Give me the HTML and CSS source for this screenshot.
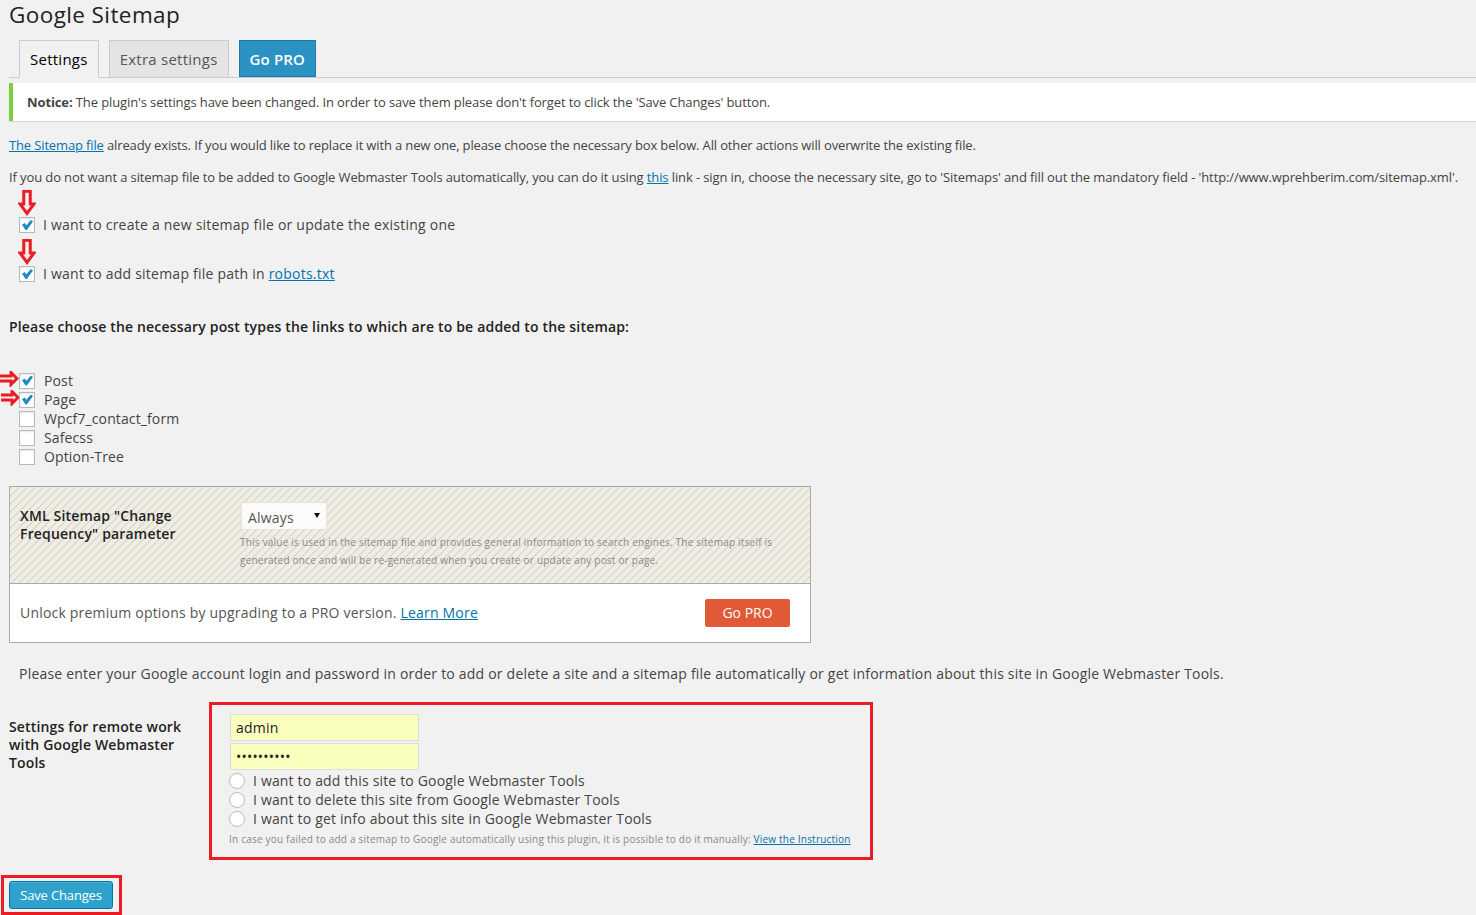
FILE: index.html
```html
<!DOCTYPE html>
<html lang="en">
<head>
    <meta charset="UTF-8">
    <title>Google Sitemap</title>
    <link rel="stylesheet" href="styles.css">
</head>
<body>
<div class="wrap">

    <h2 class="page-title">Google Sitemap</h2>

    <!-- Tabs -->
    <div class="nav-tabs">
        <a class="nav-tab active" href="#">Settings</a>
        <a class="nav-tab" href="#">Extra settings</a>
        <a class="nav-tab pro" href="#">Go PRO</a>
    </div>

    <!-- Notice -->
    <div class="notice"><strong>Notice:</strong> The plugin's settings have been changed. In order to save them please don't forget to click the 'Save Changes' button.</div>

    <p class="intro"><a href="#">The Sitemap file</a> already exists. If you would like to replace it with a new one, please choose the necessary box below. All other actions will overwrite the existing file.</p>
    <p class="intro second">If you do not want a sitemap file to be added to Google Webmaster Tools automatically, you can do it using <a href="#">this</a> link - sign in, choose the necessary site, go to 'Sitemaps' and fill out the mandatory field - 'http://www.wprehberim.com/sitemap.xml'.</p>

    <!-- Sitemap options -->
    <div class="option first">
        <svg class="arrow-down" viewBox="0 0 18 27"><path d="M5.75 1.25H12.25V14H16L9 23.500 2 14H5.75Z"/></svg>
        <label><input type="checkbox" checked> <span>I want to create a new sitemap file or update the existing one</span></label>
    </div>
    <div class="option">
        <svg class="arrow-down" viewBox="0 0 18 27"><path d="M5.75 1.25H12.25V14H16L9 23.500 2 14H5.75Z"/></svg>
        <label><input type="checkbox" checked> <span>I want to add sitemap file path in <a href="#">robots.txt</a></span></label>
    </div>

    <h4 class="types-title">Please choose the necessary post types the links to which are to be added to the sitemap:</h4>

    <ul class="post-types">
        <li>
            <svg class="arrow-right" viewBox="0 0 19 16"><path d="M-3 5H11V1.500L17 7.500 11 13.500V10H-3Z"/></svg>
            <label><input type="checkbox" checked> <span>Post</span></label>
        </li>
        <li>
            <svg class="arrow-right" viewBox="0 0 19 16"><path d="M-3 5H11V1.500L17 7.500 11 13.500V10H-3Z"/></svg>
            <label><input type="checkbox" checked> <span>Page</span></label>
        </li>
        <li><label><input type="checkbox"> <span>Wpcf7_contact_form</span></label></li>
        <li><label><input type="checkbox"> <span>Safecss</span></label></li>
        <li><label><input type="checkbox"> <span>Option-Tree</span></label></li>
    </ul>

    <!-- Pro block -->
    <div class="pro-block">
        <div class="pro-options">
            <div class="pro-label">XML Sitemap "Change Frequency" parameter</div>
            <div class="pro-field">
                <div class="select-box">Always</div>
                <p class="pro-hint">This value is used in the sitemap file and provides general information to search engines. The sitemap itself is generated once and will be re-generated when you create or update any post or page.</p>
            </div>
        </div>
        <div class="pro-footer">
            <span>Unlock premium options by upgrading to a PRO version. <a href="#">Learn More</a></span>
            <a class="btn-pro" href="#">Go PRO</a>
        </div>
    </div>

    <p class="account-note">Please enter your Google account login and password in order to add or delete a site and a sitemap file automatically or get information about this site in Google Webmaster Tools.</p>

    <!-- Remote work settings -->
    <div class="remote">
        <div class="remote-label">Settings for remote work with Google Webmaster Tools</div>
        <div class="remote-box">
            <input class="text-input" type="text" value="admin">
            <input class="text-input" type="password" value="1234567890">
            <label class="radio-row"><input type="radio" name="site"> <span>I want to add this site to Google Webmaster Tools</span></label>
            <label class="radio-row"><input type="radio" name="site"> <span>I want to delete this site from Google Webmaster Tools</span></label>
            <label class="radio-row"><input type="radio" name="site"> <span>I want to get info about this site in Google Webmaster Tools</span></label>
            <div class="remote-help">In case you failed to add a sitemap to Google automatically using this plugin, it is possible to do it manually: <a href="#">View the Instruction</a></div>
        </div>
    </div>

    <div class="save-box">
        <button class="btn-save">Save Changes</button>
    </div>

</div>
</body>
</html>
```

FILE: styles.css
```css
/* Global */
* {
    box-sizing: border-box;
}

html, body {
    margin: 0;
    padding: 0;
    background: #f1f1f1;
}

body {
    color: #444;
    font-family: "Open Sans", sans-serif;
    font-size: 14px;
    letter-spacing: 0.2px;
    overflow-x: hidden;
}

a {
    color: #0073aa;
}

.wrap {
    padding-left: 9px;
    height: 915px;
    overflow: hidden;
    position: relative;
}

.page-title {
    margin: 0;
    color: #222;
    font-size: 22.5px;
    font-weight: 400;
    line-height: 29px;
    letter-spacing: 0.4px;
}

/* Tabs */
.nav-tabs {
    display: flex;
    gap: 10px;
    height: 38px;
    margin-top: 11px;
    padding-left: 10px;
    border-bottom: 1px solid #ccc;
}

.nav-tab {
    height: 38px;
    padding: 0 10px;
    border: 1px solid #ccc;
    background: #e4e4e4;
    color: #555;
    font-size: 15px;
    letter-spacing: 0.25px;
    line-height: 37px;
    text-decoration: none;
}

.nav-tab.active {
    background: #f1f1f1;
    border-bottom-color: #f1f1f1;
    color: #000;
}

.nav-tab.pro {
    height: 37px;
    background: #2b93c4;
    border-color: #1e7ba8;
    color: #fff;
    font-weight: 600;
    letter-spacing: 0.15px;
}

/* Notice */
.notice {
    height: 38px;
    margin-top: 5px;
    padding-left: 14px;
    background: #fff;
    border-left: 4px solid #7ad03a;
    box-shadow: 0 1px 1px rgba(0, 0, 0, 0.1);
    font-size: 13px;
    letter-spacing: -0.11px;
    line-height: 39px;
}

.intro {
    margin: 14px 0 0;
    font-size: 13px;
    letter-spacing: -0.14px;
    line-height: 20px;
    white-space: nowrap;
}

.intro.second {
    margin-top: 12px;
    letter-spacing: -0.11px;
}

/* Checkboxes */
input[type="checkbox"], input[type="radio"] {
    appearance: none;
    position: relative;
    flex: none;
    width: 16px;
    height: 16px;
    margin: 0;
    background: #fff;
    border: 1px solid #b4b9be;
}

input[type="checkbox"] {
    box-shadow: inset 0 1px 2px rgba(0, 0, 0, 0.1);
}

input[type="checkbox"]:checked::before {
    content: "";
    position: absolute;
    left: 2px;
    top: 2px;
    width: 11px;
    height: 10px;
    background: #1e8cbe;
    clip-path: polygon(0 48%, 24% 30%, 40% 52%, 80% 0, 100% 15%, 44% 100%, 32% 100%);
}

input[type="radio"] {
    border: 1.5px solid #bbb;
    border-radius: 50%;
}

.option {
    position: relative;
    height: 20px;
    margin: 29px 0 0 10px;
    letter-spacing: 0.23px;
    line-height: 20px;
}

.option.first {
    margin-top: 28px;
}

.option label {
    display: flex;
    align-items: center;
    gap: 8px;
    white-space: nowrap;
}

.arrow-down {
    position: absolute;
    left: -1px;
    top: -25px;
    width: 18px;
    height: 27px;
}

.arrow-right {
    position: absolute;
    left: -9px;
    top: 0;
    width: 19px;
    height: 16px;
    overflow: hidden;
}

.arrow-down path, .arrow-right path {
    fill: none;
    stroke: #ed1c24;
    stroke-width: 3;
}

.types-title {
    margin: 33px 0 0;
    color: #222;
    font-size: 14px;
    font-weight: 600;
    letter-spacing: 0.18px;
    line-height: 20px;
}

/* Post types */
.post-types {
    list-style: none;
    margin: 34px 0 0;
    padding: 0;
    letter-spacing: 0.12px;
}

.post-types li {
    position: relative;
    height: 19px;
    line-height: 19px;
}

.post-types li + li .arrow-right {
    left: -8px;
}

.post-types li label {
    display: flex;
    align-items: center;
    gap: 9px;
    padding-left: 10px;
    white-space: nowrap;
}

/* Pro block */
.pro-block {
    width: 802px;
    margin-top: 20px;
    border: 1px solid #aaa;
    background: #fff;
}

.pro-options {
    display: flex;
    height: 97px;
    padding: 15px 10px 0;
    border-bottom: 1px solid #aaa;
    background: linear-gradient(135deg, #d8d8d8 15%, #f1ede0 15%, #f1ede0 50%, #d8d8d8 50%, #d8d8d8 65%, #f1ede0 65%) 0 0 / 8px 8px;
}

.pro-label {
    width: 221px;
    flex: none;
    padding-top: 5px;
    color: #222;
    font-size: 14px;
    font-weight: 600;
    letter-spacing: 0.17px;
    line-height: 18px;
}

.pro-field {
    flex: 1;
}

.select-box {
    position: relative;
    width: 86px;
    height: 28px;
    padding-left: 6px;
    background: rgba(255, 255, 255, 0.8);
    border: 1px solid #e6e4da;
    color: #555;
    line-height: 29px;
}

.select-box::after {
    content: "";
    position: absolute;
    right: 6px;
    top: 10px;
    border-left: 3px solid transparent;
    border-right: 3px solid transparent;
    border-top: 5px solid #111;
}

.pro-hint {
    margin: 3px 0 0 -1px;
    width: 545px;
    color: #888;
    font-size: 10px;
    letter-spacing: 0.22px;
    line-height: 18px;
}

.pro-footer {
    display: flex;
    align-items: center;
    justify-content: space-between;
    height: 58px;
    padding: 0 20px 2px 10px;
    color: #555;
}

.btn-pro {
    width: 85px;
    height: 28px;
    margin-top: 2px;
    background: #e05a38;
    border-radius: 2px;
    color: #fff;
    font-size: 14px;
    font-weight: 500;
    letter-spacing: 0;
    line-height: 28px;
    text-align: center;
    text-decoration: none;
}

.account-note {
    margin: 21px 0 0 10px;
    letter-spacing: 0.21px;
    line-height: 20px;
    white-space: nowrap;
}

/* Remote work settings */
.remote {
    display: flex;
    margin-top: 18px;
}

.remote-label {
    width: 200px;
    flex: none;
    padding-top: 16px;
    padding-right: 15px;
    color: #222;
    font-weight: 600;
    letter-spacing: 0.16px;
    line-height: 18px;
}

.remote-box {
    width: 664px;
    height: 158px;
    padding: 9px 0 0 17px;
    border: 3px solid #ed1c24;
}

.text-input {
    display: block;
    width: 189px;
    height: 27px;
    margin: 0 0 2px 1px;
    padding: 0 5px;
    background: #faffbd;
    border: 1px solid #ddd;
    color: #222;
    font-family: "Open Sans", sans-serif;
    font-size: 14px;
    letter-spacing: 0.2px;
}

.text-input + .text-input {
    margin-bottom: 1px;
}

.radio-row {
    display: flex;
    align-items: center;
    gap: 8px;
    height: 19px;
    letter-spacing: 0.17px;
    line-height: 19px;
    white-space: nowrap;
}

.remote-help {
    margin-top: 2px;
    color: #888;
    font-size: 10px;
    letter-spacing: 0.21px;
    line-height: 18px;
    white-space: nowrap;
}

/* Save button */
.save-box {
    position: absolute;
    left: 1px;
    top: 875px;
    width: 121px;
    height: 40px;
    padding: 3px 0 0 5px;
    border: 3px solid #ed1c24;
}

.btn-save {
    display: block;
    width: 104px;
    height: 28px;
    padding: 0;
    background: #2ea2cc;
    border: 1px solid #0074a2;
    border-radius: 3px;
    box-shadow: inset 0 1px 0 rgba(120, 200, 230, 0.5);
    color: #fff;
    font-family: "Open Sans", sans-serif;
    font-size: 13px;
    letter-spacing: -0.15px;
}
```
